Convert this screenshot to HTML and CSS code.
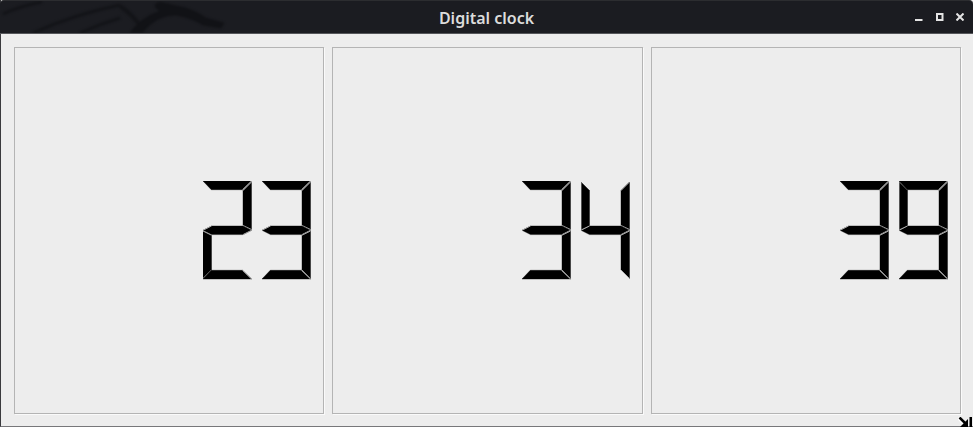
FILE: index.html
```html
<!DOCTYPE html>
<html lang="en">
<head>
  <meta charset="UTF-8" />
  <title>Digital clock</title>
  <link rel="stylesheet" href="styles.css">
</head>
<body>

  <!-- LCD segments, reused by every digit -->
  <svg class="defs" width="0" height="0">
    <defs>
      <g id="seg-top"><polygon points="0,0 48.5,0 39.5,8.7 8.3,8.7" /><path d="M48.5,0 L39.5,8.7" /></g>
      <g id="seg-ul"><polygon points="0,1 8.5,9.5 8.5,44.5 0,48.5" /><path d="M0,1 L0,48.5" /></g>
      <g id="seg-ur"><polygon points="48.5,1 40,9.5 40,44.5 48.5,48.5" /><path d="M48.5,1 L40,9.5 M40,44.5 L48.5,48.5" /></g>
      <g id="seg-mid"><polygon points="0,49.3 8.5,45 40,45 48.5,49.3 40,53.6 8.5,53.6" /><path d="M0,49.3 L8.5,45 M40,53.6 L48.5,49.3" /></g>
      <g id="seg-ll"><polygon points="0,50 8.5,54.2 8.5,89 0,97.5" /><path d="M0,50 L8.5,54.2 M0,97.5 L8.5,89" /></g>
      <g id="seg-lr"><polygon points="48.5,50 40,54.2 40,89 48.5,97.5" /><path d="M48.5,50 L40,54.2 M40,89 L48.5,97.5" /></g>
      <g id="seg-bot"><polygon points="8.3,89.3 39.5,89.3 48.5,98 0,98" /><path d="M39.5,89.3 L48.5,98" /></g>

      <g id="d2"><use href="#seg-top" /><use href="#seg-ur" /><use href="#seg-mid" /><use href="#seg-ll" /><use href="#seg-bot" /></g>
      <g id="d3"><use href="#seg-top" /><use href="#seg-ur" /><use href="#seg-mid" /><use href="#seg-lr" /><use href="#seg-bot" /></g>
      <g id="d4"><use href="#seg-ul" /><use href="#seg-ur" /><use href="#seg-mid" /><use href="#seg-lr" /></g>
      <g id="d9"><use href="#seg-top" /><use href="#seg-ul" /><use href="#seg-ur" /><use href="#seg-mid" /><use href="#seg-lr" /><use href="#seg-bot" /></g>
    </defs>
  </svg>

  <div class="window">
    <header class="titlebar">
      <!-- dragon wallpaper showing through the title bar -->
      <svg class="dragon" width="240" height="33" viewBox="0 0 240 33">
        <path class="wing" d="M3,14 Q20,6 42,2 M33,33 Q75,14 120,5 M80,33 Q100,24 120,18" />
        <path class="neck" d="M120,6 Q132,14 142,28" />
        <path class="body" d="M130,33 Q140,18 160,11 Q150,5 160,2 Q176,6 186,8 Q198,12 206,18 L224,23 L221,28 L203,25 Q192,18 176,15 Q156,15 142,33 Z" />
      </svg>
      <div class="title-spacer"></div>
      <div class="title">Digital clock</div>
      <div class="controls">
        <svg class="ctl" width="8" height="8" viewBox="0 0 8 8"><path d="M0,7 H7.5" /></svg>
        <svg class="ctl" width="8" height="8" viewBox="0 0 8 8"><rect x="1" y="1" width="5.5" height="6" /></svg>
        <svg class="ctl" width="8" height="8" viewBox="0 0 8 8"><path d="M0.5,0.5 L7.5,7.5 M7.5,0.5 L0.5,7.5" /></svg>
      </div>
    </header>

    <main class="clock">
      <section class="panel">
        <svg class="digit" width="49" height="99" viewBox="0 0 49 99"><use href="#d2" /></svg>
        <svg class="digit" width="49" height="99" viewBox="0 0 49 99"><use href="#d3" /></svg>
      </section>
      <section class="panel">
        <svg class="digit" width="49" height="99" viewBox="0 0 49 99"><use href="#d3" /></svg>
        <svg class="digit" width="49" height="99" viewBox="0 0 49 99"><use href="#d4" /></svg>
      </section>
      <section class="panel">
        <svg class="digit" width="49" height="99" viewBox="0 0 49 99"><use href="#d3" /></svg>
        <svg class="digit" width="49" height="99" viewBox="0 0 49 99"><use href="#d9" /></svg>
      </section>
    </main>

    <!-- cursor left on the resize corner -->
    <svg class="resize" width="15" height="10" viewBox="0 0 15 10">
      <path class="halo" d="M0.5,0.5 L6,6" />
      <path class="shaft" d="M1.5,0.5 L7,6" />
      <polygon points="10,2 10,10 2,10" />
      <rect x="11.5" y="0" width="2.5" height="10" />
    </svg>
  </div>

</body>
</html>
```

FILE: styles.css
```css
* {
  box-sizing: border-box;
}

html, body {
  margin: 0;
  padding: 0;
  height: 100%;
  overflow: hidden;
  background: #2a2b2e;
}

.defs {
  position: absolute;
}

/* rules for the segments go on .defs, <use> copies keep the styles of the originals */
.defs polygon {
  fill: #000;
  stroke: #000;
  stroke-width: 0.4;
}

.defs path {
  fill: none;
  stroke: #a8a8a8;
  stroke-width: 1;
}

.window {
  position: relative;
  height: 100%;
  display: flex;
  flex-direction: column;
  background: #ededed;
  border-left: 1px solid #3a3a3d;
  border-bottom: 1px solid #77777a;
}

.titlebar {
  position: relative;
  height: 34px;
  flex: none;
  display: grid;
  grid-template-columns: 1fr auto 1fr;
  align-items: center;
  margin-left: -1px;
  background: #1b1c21;
  border-top: 1px solid #2c2d30;
  border-bottom: 1px solid #55565a;
  border-top-left-radius: 4px;
  border-top-right-radius: 4px;
  overflow: hidden;
}

.dragon {
  position: absolute;
  left: 0;
  top: -1px;
  filter: blur(0.8px);
}

.dragon path {
  fill: none;
  stroke: #131418;
}

.dragon .wing {
  stroke-width: 3;
}

.dragon .neck {
  stroke-width: 4;
}

.dragon .body {
  fill: #111216;
  stroke-width: 1;
}

.title {
  position: relative;
  padding-top: 1px;
  font-family: "Noto Sans", sans-serif;
  font-size: 16px;
  font-weight: 600;
  color: #dcdcdc;
}

.controls {
  position: relative;
  display: flex;
  justify-content: flex-end;
  gap: 12.5px;
  padding: 0 9px 0 0;
}

.ctl {
  display: block;
  fill: none;
  stroke: #e4e4e4;
  stroke-width: 2;
}

.clock {
  flex: 1;
  display: grid;
  grid-template-columns: repeat(3, 1fr);
  gap: 8px;
  padding: 13px 12px 12px 13px;
}

.panel {
  display: flex;
  align-items: center;
  justify-content: flex-end;
  gap: 10px;
  padding-right: 12px;
  border: 1px solid #b4b4b4;
  box-shadow: 1px 1px 0 #fafafa;
}

.digit {
  display: block;
}

.resize {
  position: absolute;
  right: 0;
  bottom: -1px;
  fill: #000;
}

.resize .halo {
  fill: none;
  stroke: #fff;
  stroke-width: 4;
}

.resize .shaft {
  fill: none;
  stroke: #000;
  stroke-width: 2.5;
}
```
